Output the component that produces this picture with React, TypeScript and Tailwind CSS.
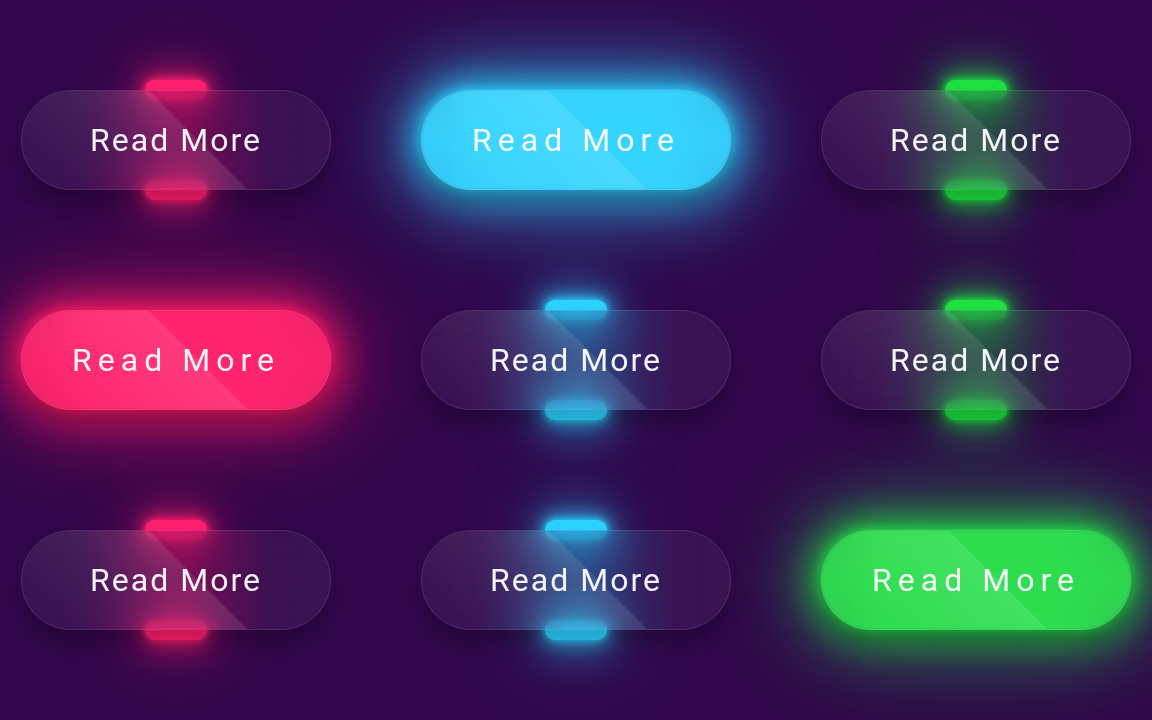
const colors = {
  pink: {
    bar: "bg-[#ff1f6e] shadow-[0_0_6px_#ff1f6e,0_0_18px_2px_#ff1f6ee6,0_0_40px_8px_#ff1f6e80,0_0_80px_14px_#ff1f6e40]",
    glow: "bg-[#ff1a66] shadow-[0_0_12px_2px_#ff1a66,0_0_35px_8px_#ff1a66cc,0_0_70px_16px_#ff1a6680,0_0_110px_24px_#ff1a6640]",
    tint: "bg-[linear-gradient(90deg,rgba(255,255,255,0.05)_18%,rgba(255,31,110,0.2)_52%,rgba(255,255,255,0.05)_82%)]",
  },
  cyan: {
    bar: "bg-[#2bd2ff] shadow-[0_0_6px_#2bd2ff,0_0_18px_2px_#2bd2ffe6,0_0_40px_8px_#2bd2ff80,0_0_80px_14px_#2bd2ff40]",
    glow: "bg-[#2bd2ff] shadow-[0_0_12px_2px_#2bd2ff,0_0_35px_8px_#2bd2ffcc,0_0_70px_16px_#2bd2ff80,0_0_110px_24px_#2bd2ff40]",
    tint: "bg-[linear-gradient(90deg,rgba(255,255,255,0.05)_18%,rgba(43,210,255,0.18)_52%,rgba(255,255,255,0.05)_82%)]",
  },
  green: {
    bar: "bg-[#1ee040] shadow-[0_0_6px_#1ee040,0_0_18px_2px_#1ee040e6,0_0_40px_8px_#1ee04080,0_0_80px_14px_#1ee04040]",
    glow: "bg-[#22dc46] shadow-[0_0_12px_2px_#22dc46,0_0_35px_8px_#22dc46cc,0_0_70px_16px_#22dc4680,0_0_110px_24px_#22dc4640]",
    tint: "bg-[linear-gradient(90deg,rgba(255,255,255,0.05)_18%,rgba(30,224,64,0.16)_52%,rgba(255,255,255,0.05)_82%)]",
  },
};

type ColorName = keyof typeof colors;

const rows: { color: ColorName; active: boolean }[][] = [
  [
    { color: "pink", active: false },
    { color: "cyan", active: true },
    { color: "green", active: false },
  ],
  [
    { color: "pink", active: true },
    { color: "cyan", active: false },
    { color: "green", active: false },
  ],
  [
    { color: "pink", active: false },
    { color: "cyan", active: false },
    { color: "green", active: true },
  ],
];

function GlassButton({ color, active }: { color: ColorName; active: boolean }) {
  const c = colors[color];
  return (
    <div className="relative w-[310px] h-[100px] shrink-0 flex flex-col items-center justify-between">
      {active ? (
        <div className={`self-stretch flex-1 m-[2px] rounded-full ${c.glow}`} />
      ) : (
        <>
          <div className={`w-[62px] h-[20px] -mt-[10px] rounded-[10px] ${c.bar}`} />
          <div className={`w-[62px] h-[20px] -mb-[10px] rounded-[10px] ${c.bar}`} />
        </>
      )}
      {/* glass layer sits over the neon bars */}
      <a
        className={`absolute inset-0 flex items-center justify-center rounded-full border border-white/10 backdrop-blur-[22px] shadow-[0_15px_15px_rgba(0,0,0,0.2)] overflow-hidden ${active ? "bg-white/5" : c.tint}`}
      >
        <span className="absolute top-0 left-0 w-[176px] h-full bg-linear-to-l from-white/10 to-transparent skew-x-[45deg]" />
        <span
          className={`relative text-[32px] text-white/95 font-normal ${active ? "tracking-[6px]" : "tracking-[2px]"}`}
          style={{ fontFamily: "Roboto, 'Liberation Sans', sans-serif" }}
        >
          Read More
        </span>
      </a>
    </div>
  );
}

export default function App() {
  return (
    <div className="w-full h-screen overflow-hidden bg-[#30074b] pt-[90px] pl-[21px]">
      <div className="flex flex-col gap-[120px]">
        {rows.map((row, i) => (
          <div key={i} className="flex gap-[90px]">
            {row.map((b, j) => (
              <GlassButton key={j} color={b.color} active={b.active} />
            ))}
          </div>
        ))}
      </div>
    </div>
  );
}
